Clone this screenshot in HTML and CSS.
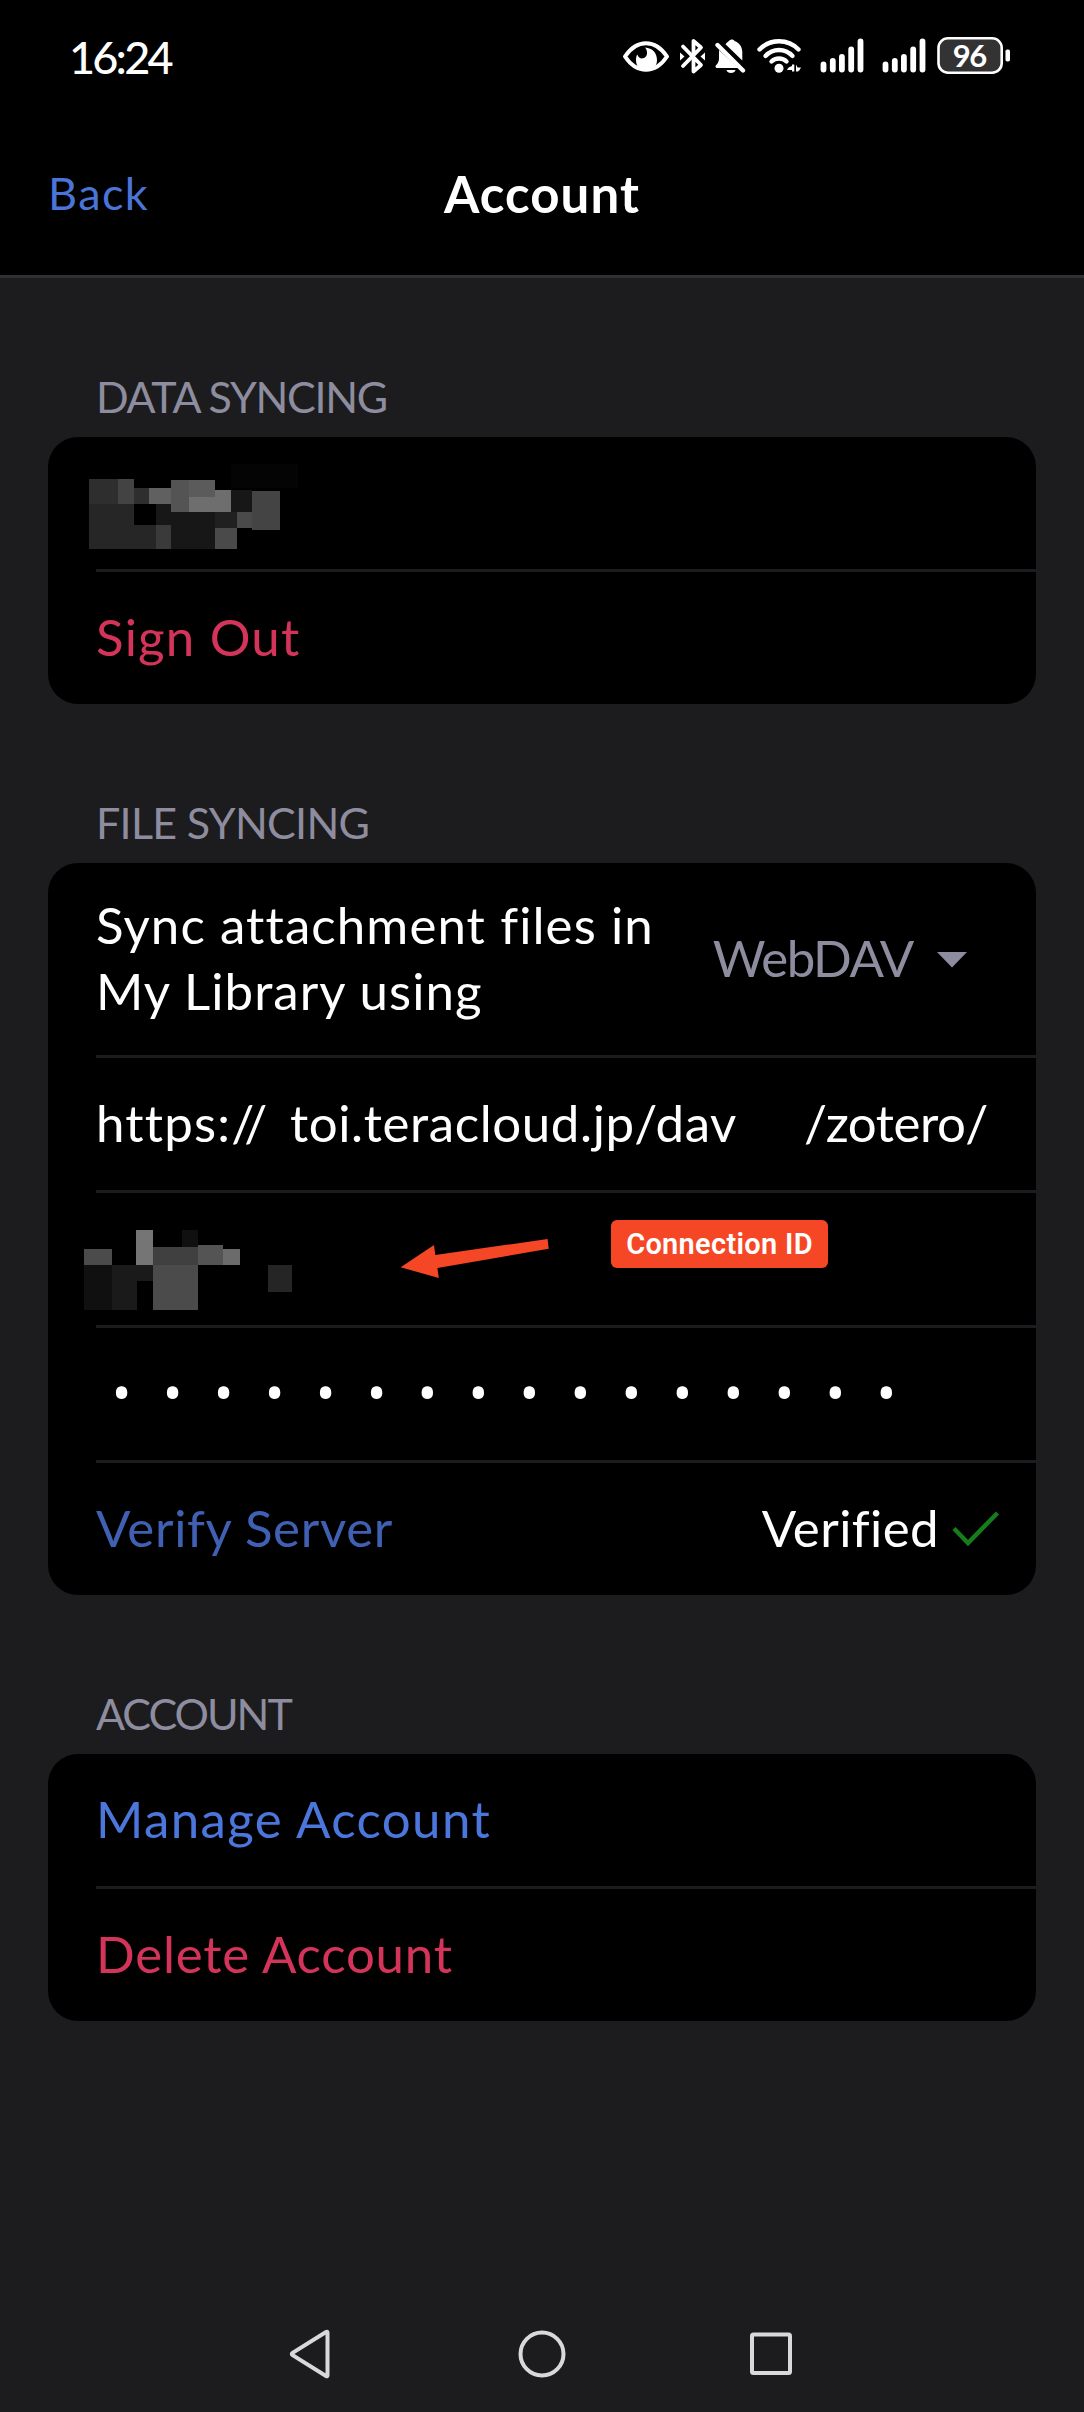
FILE: index.html
```html
<!DOCTYPE html>
<html lang="en">
<head>
<meta charset="utf-8">
<title>Account</title>
<link rel="stylesheet" href="styles.css">
</head>
<body>
<header class="header">
  <div class="status-bar">
    <span class="clock">16:24</span>
    <div class="status-icons">
      <svg class="icon-eye" width="46" height="40" viewBox="623 36 46 40">
        <path d="M625 56.5C630 49 637 43.2 646 43.2S662 49 667 56.5C662 64 655 69.8 646 69.8S630 64 625 56.5Z" fill="none" stroke="#fff" stroke-width="4" stroke-linejoin="round"/>
        <path d="M645 47.5C652.500 48 657 53 657 60C657 67 652.500 70.500 646.500 70.500C640 70.500 636 66.500 636 60C636 57.500 636.500 55.500 637.300 54.500C638.500 57.500 640.500 58.800 643 58.300C647.500 57.300 648.500 51.500 645 47.500Z" fill="#fff"/>
      </svg>
      <svg class="icon-bluetooth" width="27" height="40" viewBox="679 36 27 40">
        <g fill="none" stroke="#fff" stroke-width="3.800" stroke-linecap="round" stroke-linejoin="round">
          <path d="M683 66L701 47.500L693.500 41V53"/>
          <path d="M683 46.500L701 65L693.500 71.500V60"/>
        </g>
        <path d="M680 52.500L684.500 56.500L680 60.500ZM705 52.500L700.500 56.500L705 60.500Z" fill="#fff"/>
      </svg>
      <svg class="icon-bell" width="32" height="40" viewBox="714 36 32 40">
        <path d="M719 50L738.500 68H717C715.500 68 715 66.500 716 65.300C718.200 63 719 61.500 719 58ZM742.300 60.500L725.500 44.300C726.500 42.800 727.500 41.800 729 41C730.500 39 733.500 39 734.500 41C739.500 42.800 742.300 47 742.300 52Z" fill="#fff"/>
        <path d="M717.500 45L743 70.500" stroke="#fff" stroke-width="4.400" stroke-linecap="round"/>
        <path d="M726.500 70H735.500C735 74 727 74 726.500 70Z" fill="#fff"/>
      </svg>
      <svg class="icon-wifi" width="46" height="40" viewBox="756 36 46 40">
        <g fill="none" stroke="#fff" stroke-width="4.400" stroke-linecap="round">
          <path d="M759.500 49.500C770 38.500 788 38.500 798.500 49.500"/>
          <path d="M765.500 56C773 48 785 48 792.500 56"/>
          <path d="M771.500 61.500C775.500 57.600 782.500 57.600 786.500 61.500"/>
        </g>
        <circle cx="779" cy="68.300" r="4.500" fill="#fff"/>
        <path d="M792 64.500H794.300V71.500H792V70H787Q788 67 792 66ZM796 64.500L797.500 67.500H801Q800 70 798 71.500H796Z" fill="#fff"/>
      </svg>
      <svg class="icon-signal" width="44" height="40" viewBox="819.500 36 44 40">
        <path d="M823 64.500V69.500M832.300 61V69.500M841.400 57V69.500M850.700 49.500V69.500M860 41.500V69.500" stroke="#fff" stroke-width="5.800" stroke-linecap="round"/>
      </svg>
      <svg class="icon-signal" width="44" height="40" viewBox="819.500 36 44 40">
        <path d="M823 64.500V69.500M832.300 61V69.500M841.400 57V69.500M850.700 49.500V69.500M860 41.500V69.500" stroke="#fff" stroke-width="5.800" stroke-linecap="round"/>
      </svg>
      <svg class="icon-battery" width="75" height="40" viewBox="936 36 75 40">
        <rect x="938.500" y="38.300" width="63.200" height="34.400" rx="9.500" fill="#333" stroke="#fff" stroke-width="2.600"/>
        <rect x="1005.500" y="49.500" width="4.500" height="12" rx="1.800" fill="#fff"/>
        <text class="battery-level" x="969.300" y="66.600" text-anchor="middle">96</text>
      </svg>
    </div>
  </div>
  <div class="toolbar">
    <a class="back">Back</a>
    <h1 class="title">Account</h1>
  </div>
</header>

<main class="content">
  <section class="section">
    <h2 class="label label-data">DATA SYNCING</h2>
    <div class="card">
      <div class="row">
        <svg class="mosaic mosaic-user" width="210" height="86" viewBox="146 311 630 258" shape-rendering="crispEdges">
          <path fill="#040404" d="M573 311h200v71H573z"/>
          <path fill="#2e2e2e" d="M147 357h87v75h-87zM281 384h46v48h-46z"/>
          <path fill="#434343" d="M234 357h47v75h-47z"/>
          <path fill="#606060" d="M327 384h66v48h-66z"/>
          <path fill="#545454" d="M393 360h54v96h-54z"/>
          <path fill="#5b5b5b" d="M447 360h78v51h-78z"/>
          <path fill="#6e6e6e" d="M447 411h78v-21h48v66H447z"/>
          <path fill="#171717" d="M573 390h63v66h-63zM348 432h45v24h132v111H393v-72h-45z"/>
          <path fill="#262626" d="M147 432h134v63h67v72H147z"/>
          <path fill="#3a3a3a" d="M348 495h45v72h-45z"/>
          <path fill="#202020" d="M525 456h66v48h-66z"/>
          <path fill="#4a4a4a" d="M525 504h66v63h-66zM591 456h45v48h-45z"/>
          <path fill="#444" d="M636 393h84v117h-84z"/>
        </svg>
      </div>
      <div class="row"><span class="text danger sign-out">Sign Out</span></div>
    </div>
  </section>

  <section class="section">
    <h2 class="label label-file">FILE SYNCING</h2>
    <div class="card">
      <div class="row row-tall">
        <span class="text"><span class="line-one">Sync attachment files in</span><br><span class="line-two">My Library using</span></span>
        <span class="select">
          <span class="text select-value">WebDAV</span>
          <svg class="caret" width="30" height="16" viewBox="0 0 30 16"><path d="M0 0H30L15 15.500Z" fill="#8e8d9f"/></svg>
        </span>
      </div>
      <div class="row">
        <span class="text scheme">https://</span>
        <span class="text host">toi.teracloud.jp/dav</span>
        <span class="text path">/zotero/</span>
      </div>
      <div class="row">
        <svg class="mosaic mosaic-id" width="210" height="82" viewBox="127 149 610 246" preserveAspectRatio="none" shape-rendering="crispEdges">
          <path fill="#4b4b4b" d="M128 207h81v48h-81zM328 255h131v134H328z"/>
          <path fill="#757575" d="M279 150h49v105h-49z"/>
          <path fill="#101010" d="M412 150h47v51h-47zM128 255h81v134h-81z"/>
          <path fill="#404040" d="M328 201h131v54H328z"/>
          <path fill="#545454" d="M459 195h72v60h-72z"/>
          <path fill="#6b6b6b" d="M531 207h50v48h-50z"/>
          <path fill="#1a1a1a" d="M209 255h119v48h-47v86h-72z"/>
          <path fill="#252525" d="M662 255h70v81h-70z"/>
        </svg>
        <svg class="arrow" width="150" height="41" viewBox="400 1238 150 41">
          <path d="M400.700 1267.300L434 1245L435.300 1255L547.600 1239L548.700 1248.700L437.400 1268L438.800 1278Z" fill="#f54725"/>
        </svg>
        <span class="badge">Connection ID</span>
      </div>
      <div class="row row-password"><span class="password">••••••••••••••••</span></div>
      <div class="row row-verify">
        <span class="text link-dim">Verify Server</span>
        <span class="verified">
          <span class="text verified-text">Verified</span>
          <svg class="check" width="48" height="36" viewBox="0 0 48 36"><path d="M2 17.500L16 32L45.500 2" fill="none" stroke="#167d1b" stroke-width="4.400"/></svg>
        </span>
      </div>
    </div>
  </section>

  <section class="section">
    <h2 class="label label-account">ACCOUNT</h2>
    <div class="card">
      <div class="row"><span class="text link">Manage Account</span></div>
      <div class="row"><span class="text danger delete">Delete Account</span></div>
    </div>
  </section>
</main>

<nav class="nav-bar">
  <svg width="42" height="50" viewBox="0 0 42 50"><path d="M38.500 3.800V46.200Q38.500 47.800 37 47L3.600 26.200Q2 25 3.600 23.800L37 3Q38.500 2.200 38.500 3.800Z" fill="none" stroke="#d9d8da" stroke-width="4"/></svg>
  <svg width="48" height="50" viewBox="0 0 48 50"><circle cx="24" cy="25" r="21.500" fill="none" stroke="#d9d8da" stroke-width="4"/></svg>
  <svg width="44" height="50" viewBox="0 0 44 50"><rect x="3" y="5.500" width="38" height="38.500" rx="1.500" fill="none" stroke="#d9d8da" stroke-width="4"/></svg>
</nav>
</body>
</html>
```
FILE: styles.css
```css
* { box-sizing: border-box; }

body {
  margin: 0;
  width: 1084px;
  height: 2412px;
  display: flex;
  flex-direction: column;
  background: #1c1c1e;
  color: #fff;
  font-family: Lato, "Open Sans", sans-serif;
}

svg { display: block; flex: none; }

/* Header */
.header {
  height: 278px;
  background: #000;
  border-bottom: 3px solid #303033;
}
.status-bar {
  height: 112px;
  padding: 0 73px 0 69px;
  display: flex;
  align-items: center;
  justify-content: space-between;
}
.clock {
  padding-top: 2px;
  font-size: 45px;
  font-weight: 500;
  line-height: 56px;
  letter-spacing: -2.8px;
}
.status-icons { display: flex; align-items: center; }
.icon-bluetooth { margin-left: 10px; }
.icon-bell { margin-left: 8px; }
.icon-wifi { margin-left: 10px; }
.icon-signal { margin-left: 18px; }
.icon-battery { margin-left: 10px; }
.battery-level {
  font-size: 31px;
  font-weight: 700;
  letter-spacing: -1.5px;
  fill: #fff;
}
.toolbar {
  height: 163px;
  padding: 0 48px 1px;
  display: grid;
  grid-template-columns: 1fr auto 1fr;
  align-items: center;
}
.back {
  font-size: 45px;
  letter-spacing: 1.4px;
  color: #4b74d8;
}
.title {
  margin: 0;
  font-size: 51px;
  font-weight: 700;
  letter-spacing: 1.1px;
}

/* Grouped lists */
.content {
  flex: 1;
  padding: 0 48px;
}
.section { padding-top: 93px; }
.label {
  margin: 0 0 14px 48px;
  font-size: 43px;
  font-weight: 400;
  line-height: 52px;
  color: #8e8d9f;
}
.label-data { letter-spacing: -1.3px; }
.label-file { letter-spacing: -0.7px; }
.label-account { letter-spacing: -2px; }
.card {
  background: #000;
  border-radius: 30px;
}
.row {
  position: relative;
  height: 132px;
  margin-left: 48px;
  padding-bottom: 3px;
  display: flex;
  align-items: center;
}
.row + .row {
  height: 135px;
  border-top: 3px solid #1c1c1e;
}
.row-tall {
  height: 192px;
  justify-content: space-between;
  padding-right: 69px;
}
.row-verify {
  justify-content: space-between;
  padding-right: 36px;
}
.row-password { padding-bottom: 6px; }
.text {
  font-size: 51px;
  line-height: 66px;
  white-space: nowrap;
}
.danger { color: #d43459; }
.link { color: #4b76dc; letter-spacing: 1.4px; }
.link-dim { color: #3f60b3; letter-spacing: 0.65px; }
.sign-out { letter-spacing: 1.2px; }
.delete { letter-spacing: 0.77px; }
.line-one { letter-spacing: 1.1px; }
.line-two { letter-spacing: 1.05px; }
.select { display: flex; align-items: center; gap: 24px; }
.select-value { color: #8e8d9f; letter-spacing: -1.4px; }
.caret { margin-top: 4px; }
.scheme { width: 194px; letter-spacing: 1.2px; }
.host { width: 514px; letter-spacing: 0.6px; }
.path { letter-spacing: -0.5px; }
.verified { display: flex; align-items: center; gap: 13px; }
.verified-text { letter-spacing: 0.4px; }
.check { margin-top: 2px; }
.password {
  padding-left: 16px;
  font-family: "Noto Sans", sans-serif;
  font-size: 51px;
  line-height: 66px;
  letter-spacing: 31.8px;
  white-space: nowrap;
}

/* Redactions and annotations over the rows */
.mosaic { position: absolute; }
.mosaic-user { left: -7px; top: 27px; }
.mosaic-id { left: -12px; top: 37px; }
.arrow { position: absolute; left: 304px; top: 45px; }
.badge {
  position: absolute;
  left: 515px;
  top: 27px;
  width: 217px;
  height: 48px;
  border-radius: 6px;
  background: #f54725;
  font-family: Roboto, sans-serif;
  font-size: 29px;
  font-weight: 600;
  line-height: 48px;
  letter-spacing: 0.3px;
  text-align: center;
  white-space: nowrap;
}

/* System navigation */
.nav-bar {
  height: 116px;
  padding-left: 289px;
  display: flex;
  align-items: center;
}
.nav-bar svg + svg { margin-left: 187px; }
.nav-bar svg:last-child { margin-left: 183px; }
```
